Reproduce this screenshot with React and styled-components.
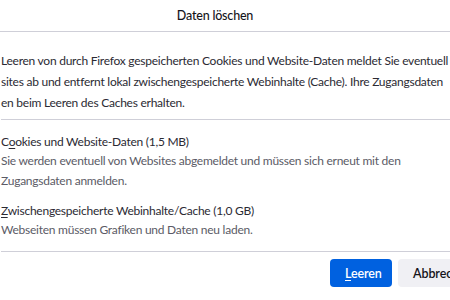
import React from 'react';
import styled, { createGlobalStyle } from 'styled-components';

const Global = createGlobalStyle`
	html, body {
		margin: 0;
		padding: 0;
		background: #ffffff;
	}
	body {
		width: 450px;
		height: 300px;
		overflow: hidden;
		font-family: Lato, "Noto Sans", sans-serif;
		color: #15141a;
	}
`;

const Dialog = styled.div`
	display: flex;
	flex-direction: column;
	width: 450px;
	height: 300px;
	overflow: hidden;
	white-space: nowrap;
`;

const Header = styled.div`
	height: 31px;
	display: flex;
	align-items: center;
	justify-content: center;
	border-bottom: 1px solid #cfcfd8;
	font-size: 12.5px;
	letter-spacing: -0.2px;
	font-weight: 500;
	padding-right: 20px;
`;

const Body = styled.div`
	padding: 18px 0 0 1px;
	font-size: 12px;
	letter-spacing: -0.25px;
`;

const Intro = styled.p`
	margin: 0;
	line-height: 21px;
	padding-bottom: 6px;
	border-bottom: 1px solid #cfcfd8;
	margin-right: -20px;
	color: #2b2a33;
`;

const Options = styled.div`
	display: flex;
	flex-direction: column;
	gap: 11px;
	padding: 13px 0 11px 0;
	border-bottom: 1px solid #cfcfd8;
	margin-right: -20px;
`;

const Option = styled.div`
	display: flex;
	flex-direction: column;
`;

const Label = styled.div`
	line-height: 18px;
	color: #2b2a33;
`;

const Hint = styled.div`
	line-height: 20px;
	color: #5b5b66;
`;

const Key = styled.span`
	text-decoration: underline;
	text-underline-offset: 2px;
`;

const Footer = styled.div`
	display: flex;
	gap: 6px;
	padding: 7px 0 0 329px;
`;

const Button = styled.button`
	height: 28px;
	border: none;
	border-radius: 4px;
	padding: 0 15px;
	font-family: inherit;
	font-size: 12.5px;
	letter-spacing: -0.1px;
	font-weight: 600;
	background: ${(p) => (p.$primary ? '#0061e0' : '#f0f0f4')};
	color: ${(p) => (p.$primary ? '#ffffff' : '#15141a')};
	flex-shrink: 0;
	width: ${(p) => (p.$primary ? '62px' : 'auto')};
`;

export default function App() {
	return (
		<>
			<Global />
			<Dialog>
				<Header>Daten löschen</Header>
				<Body>
					<Intro>
						Leeren von durch Firefox gespeicherten Cookies und Website-Daten meldet Sie eventuell
						<br />
						sites ab und entfernt lokal zwischengespeicherte Webinhalte (Cache). Ihre Zugangsdaten
						<br />
						en beim Leeren des Caches erhalten.
					</Intro>
					<Options>
						<Option>
							<Label>
								C<Key>o</Key>okies und Website-Daten (1,5 MB)
							</Label>
							<Hint>
								Sie werden eventuell von Websites abgemeldet und müssen sich erneut mit den
								<br />
								Zugangsdaten anmelden.
							</Hint>
						</Option>
						<Option>
							<Label>
								<Key>Z</Key>wischengespeicherte Webinhalte/Cache (1,0 GB)
							</Label>
							<Hint>Webseiten müssen Grafiken und Daten neu laden.</Hint>
						</Option>
					</Options>
					<Footer>
						<Button $primary>
							<Key>L</Key>eeren
						</Button>
						<Button>Abbrechen</Button>
					</Footer>
				</Body>
			</Dialog>
		</>
	);
}
